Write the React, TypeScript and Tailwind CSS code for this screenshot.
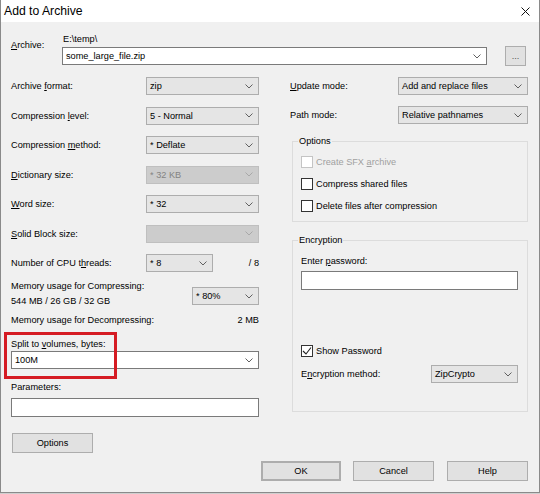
import React from "react";

function U({ text, i }: { text: string; i?: number }) {
  if (i === undefined || i < 0) return <>{text}</>;
  return (
    <>
      {text.slice(0, i)}
      <span className="underline underline-offset-[1px] decoration-[1px]">{text[i]}</span>
      {text.slice(i + 1)}
    </>
  );
}

function Chevron({ disabled }: { disabled?: boolean }) {
  return (
    <svg width="8" height="5" viewBox="0 0 8 5" className="shrink-0">
      <path d="M0.5 0.5 L4 4 L7.5 0.5" fill="none" stroke={disabled ? "#a8a8a8" : "#606060"} strokeWidth="1" />
    </svg>
  );
}

type Variant = "list" | "edit" | "disabled";

function Select({ value, cls, variant = "list" }: { value?: string; cls: string; variant?: Variant }) {
  const v =
    variant === "edit"
      ? "bg-white border-[#7a7a7a] text-black"
      : variant === "disabled"
      ? "bg-[#cccccc] border-[#bfbfbf] text-[#838383]"
      : "bg-[#e5e5e5] border-[#adadad] text-black";
  return (
    <div className={`h-[18px] shrink-0 flex items-center justify-between border pl-[3px] pr-[5px] ${v} ${cls}`}>
      <span className="whitespace-nowrap">{value}</span>
      <Chevron disabled={variant === "disabled"} />
    </div>
  );
}

function Row({ label, u, value, variant }: { label: string; u?: number; value?: string; variant?: Variant }) {
  return (
    <div className="flex items-center justify-between h-[18px]">
      <span className="whitespace-nowrap">
        <U text={label} i={u} />
      </span>
      <Select value={value} cls="w-[113px]" variant={variant} />
    </div>
  );
}

function Check({ label, u, checked, disabled }: { label: string; u?: number; checked?: boolean; disabled?: boolean }) {
  return (
    <div className="flex items-center h-[14px]">
      <div
        className={`w-[12px] h-[12px] border bg-white flex items-center justify-center ${
          disabled ? "border-[#c4c4c4] bg-[#f0f0f0]" : "border-[#333333]"
        }`}
      >
        {checked && (
          <svg width="10" height="10" viewBox="0 0 10 10">
            <path d="M1 5 L4 8 L9 1.5" fill="none" stroke="#222" strokeWidth="1.1" />
          </svg>
        )}
      </div>
      <span className={`ml-[3px] whitespace-nowrap ${disabled ? "text-[#a0a0a0]" : ""}`}>
        <U text={label} i={u} />
      </span>
    </div>
  );
}

function Btn({ label, cls }: { label: string; cls: string }) {
  return (
    <div className={`h-[20px] flex items-center justify-center bg-[#e1e1e1] border border-[#adadad] ${cls}`}>
      {label}
    </div>
  );
}

export default function App() {
  return (
    <div className="w-[540px] h-[494px] bg-[#cfcfcf] font-['Liberation_Sans',Arial,sans-serif] text-[9.2px] leading-[14px] text-black overflow-hidden">
      <div className="w-[540px] h-[493px] flex flex-col border-x border-b border-[#8a8a8a] bg-[#f0f0f0]">
        {/* title bar */}
        <div className="h-[22px] shrink-0 bg-white flex items-center justify-between pl-[3px] pr-[9px]">
          <span className="text-[12.2px] leading-[16px]">Add to Archive</span>
          <svg width="9" height="9" viewBox="0 0 9 9">
            <path d="M0.5 0.5 L8.5 8.5 M8.5 0.5 L0.5 8.5" stroke="#111" strokeWidth="1" />
          </svg>
        </div>

        <div className="relative flex-1 flex flex-col pl-[10px] pr-[11px]">
          {/* archive row */}
          <div className="flex mt-[11px]">
            <div className="w-[51px] pt-[5px]">
              <U text="Archive:" i={0} />
            </div>
            <div className="flex-1 flex flex-col">
              <div className="h-[12px] leading-[12px] pl-[1px]">E:\temp\</div>
              <div className="flex items-center mt-[1px] h-[20px]">
                <Select value="some_large_file.zip" cls="w-[425px]" variant="edit" />
                <div className="ml-[18px] w-[21px] h-[20px] flex items-center justify-center bg-[#e1e1e1] border border-[#adadad] text-[#555] leading-[10px]">
                  ...
                </div>
              </div>
            </div>
          </div>

          {/* columns */}
          <div className="flex mt-[11px]">
            {/* left column */}
            <div className="w-[248px] flex flex-col">
              <div className="flex flex-col gap-[11.5px]">
                <Row label="Archive format:" u={8} value="zip" />
                <Row label="Compression level:" u={12} value="5 - Normal" />
                <Row label="Compression method:" u={12} value="* Deflate" />
                <Row label="Dictionary size:" u={0} value="* 32 KB" variant="disabled" />
                <Row label="Word size:" u={0} value="* 32" />
                <Row label="Solid Block size:" u={0} value="" variant="disabled" />
                <div className="flex items-center h-[18px]">
                  <span className="w-[135px] whitespace-nowrap">
                    <U text="Number of CPU threads:" i={15} />
                  </span>
                  <Select value="* 8" cls="w-[67px]" />
                  <span className="flex-1 text-right">/ 8</span>
                </div>
              </div>

              <div className="flex justify-between items-start mt-[7px]">
                <div className="leading-[15px]">
                  <div>Memory usage for Compressing:</div>
                  <div>544 MB / 26 GB / 32 GB</div>
                </div>
                <Select value="* 80%" cls="w-[67px] mt-[8px]" />
              </div>

              <div className="flex justify-between mt-[4px]">
                <span>Memory usage for Decompressing:</span>
                <span>2 MB</span>
              </div>

              <div className="mt-[10px]">
                <U text="Split to volumes, bytes:" i={9} />
              </div>
              <Select value="100M" cls="w-full" variant="edit" />

              <div className="mt-[11px]">Parameters:</div>
              <div className="mt-[4px] h-[19px] w-full bg-white border border-[#7a7a7a]" />

              <Btn label="Options" cls="mt-[16px] ml-[1px] w-[81px]" />
            </div>

            {/* right column */}
            <div className="w-[238px] ml-[31px] flex flex-col">
              <div className="flex flex-col gap-[11px]">
                <div className="flex items-center justify-between h-[18px]">
                  <span>
                    <U text="Update mode:" i={0} />
                  </span>
                  <Select value="Add and replace files" cls="w-[130px]" />
                </div>
                <div className="flex items-center justify-between h-[18px]">
                  <span>Path mode:</span>
                  <Select value="Relative pathnames" cls="w-[130px]" />
                </div>
              </div>

              <fieldset className="mt-[10px] ml-[2px] w-[236px] border border-[#dcdcdc] p-0 m-0">
                <legend className="ml-[5px] px-[1px]">Options</legend>
                <div className="flex flex-col gap-[8px] px-[8px] pt-[7px] pb-[8px]">
                  <Check label="Create SFX archive" u={11} disabled />
                  <Check label="Compress shared files" />
                  <Check label="Delete files after compression" />
                </div>
              </fieldset>

              <fieldset className="mt-[11px] ml-[2px] w-[236px] border border-[#dcdcdc] p-0 m-0">
                <legend className="ml-[5px] px-[1px]">Encryption</legend>
                <div className="flex flex-col px-[8px] pt-[7px] pb-[28px]">
                  <div>
                    <U text="Enter password:" i={6} />
                  </div>
                  <div className="mt-[3px] h-[19px] w-[217px] bg-white border border-[#7a7a7a]" />
                  <div className="mt-[54px]">
                    <Check label="Show Password" checked />
                  </div>
                  <div className="mt-[7px] flex items-center justify-between h-[18px] w-[217px]">
                    <span>
                      <U text="Encryption method:" i={1} />
                    </span>
                    <Select value="ZipCrypto" cls="w-[87px]" />
                  </div>
                </div>
              </fieldset>
            </div>
          </div>

          {/* buttons */}
          <div className="flex justify-end mt-[8px]">
            <Btn label="OK" cls="w-[80px] border-2 border-[#0078d7] mr-[12px]" />
            <Btn label="Cancel" cls="w-[81px] mr-[13px]" />
            <Btn label="Help" cls="w-[81px]" />
          </div>

          {/* red highlight */}
          <div className="absolute left-[3px] top-[310px] w-[113px] h-[47px] border-[3px] border-[#d51b23] pointer-events-none" />
        </div>
      </div>
    </div>
  );
}
